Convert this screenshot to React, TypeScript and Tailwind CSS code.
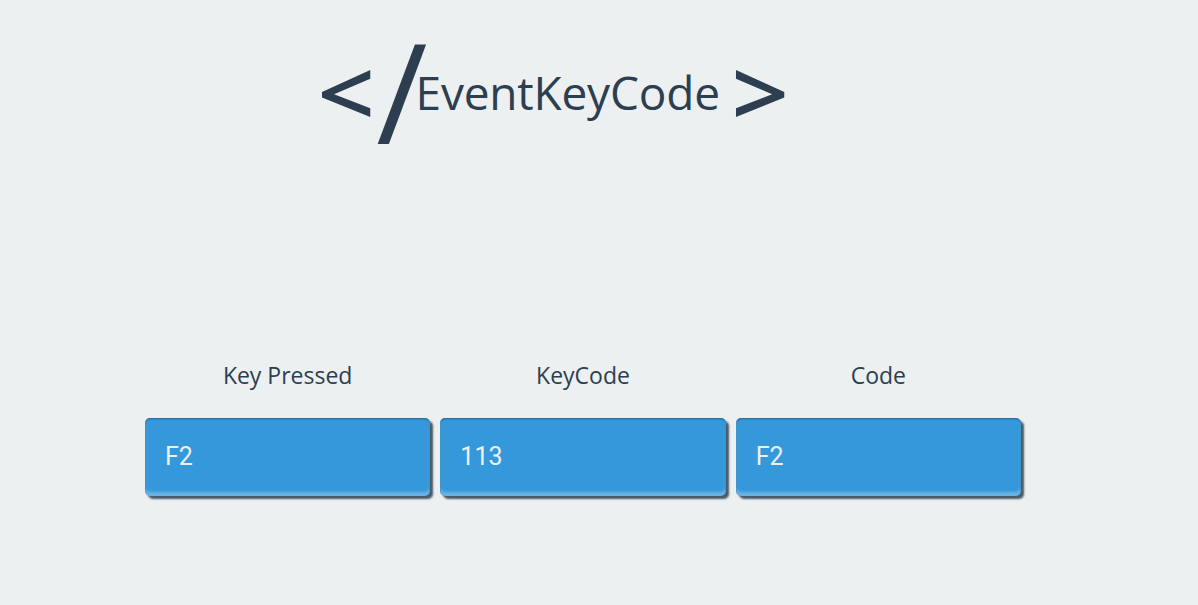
import React from "react";

const cols = [
  { label: "Key Pressed", value: "F2" },
  { label: "KeyCode", value: "113" },
  { label: "Code", value: "F2" },
];

export default function App() {
  return (
    <div
      className="w-[1198px] h-[605px] bg-[#ecf0f1] text-[#2c3e50] overflow-hidden"
      style={{ fontFamily: '"Open Sans", "Noto Sans", sans-serif' }}
    >
      <div className="flex justify-center items-start pr-[92px] pt-[20px] h-[140px]">
        <span className="text-[92px] leading-[120px] font-semibold mt-[12px] mr-[6px] scale-x-[1.1]">&lt;</span>
        <span className="text-[140px] leading-[160px] font-medium mt-[-10px] ml-[-2px]">/</span>
        <span className="text-[46px] leading-[120px] mt-[12px] ml-[-12px] tracking-[-0.2px]">EventKeyCode</span>
        <span className="text-[92px] leading-[120px] font-semibold mt-[12px] ml-[14px] scale-x-[1.1]">&gt;</span>
      </div>
      <div className="ml-[145px] mt-[220px] w-[876px] grid grid-cols-3 gap-[10px]">
        {cols.map((c) => (
          <div key={c.label} className="flex flex-col items-center">
            <div className="text-[23px] leading-[30px] h-[30px] mb-[28px]">{c.label}</div>
            <div
              className="w-full h-[78px] rounded-[5px] bg-[#3498db] flex items-center pl-[20px] text-[#ecf0f1] text-[25px] shadow-[inset_0_1px_2px_rgba(0,0,0,0.35),inset_0_-4px_3px_rgba(255,255,255,0.28),3px_3px_2px_rgba(44,62,80,0.85)]"
              style={{ fontFamily: 'Roboto, "Liberation Sans", sans-serif' }}
            >
              {c.value}
            </div>
          </div>
        ))}
      </div>
    </div>
  );
}
